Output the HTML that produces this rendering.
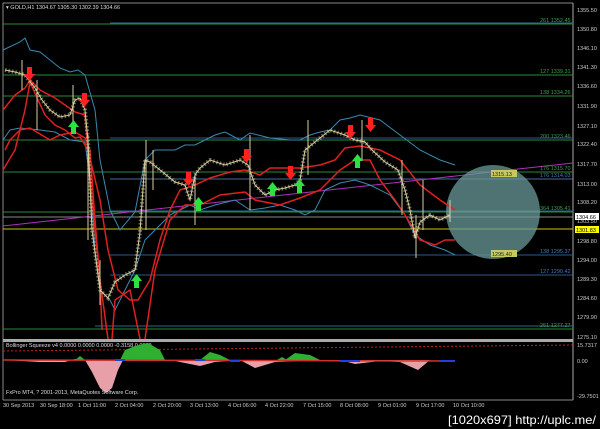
<!DOCTYPE html>
<html><head><style>
html,body{margin:0;padding:0;background:#000;width:600px;height:429px;overflow:hidden}
svg{display:block}
text{font-family:"Liberation Sans",sans-serif;font-size:6px}
.s{font-size:5.5px}
</style></head><body>
<svg width="600" height="429" viewBox="0 0 600 429">
<rect width="600" height="429" fill="#000"/>
<line x1="3" y1="3" x2="573" y2="3" stroke="#888" stroke-width="1"/>
<line x1="3" y1="3" x2="3" y2="400" stroke="#888" stroke-width="1"/>
<line x1="573" y1="3" x2="573" y2="400" stroke="#aaa" stroke-width="1"/>
<line x1="3" y1="400" x2="573" y2="400" stroke="#888"/>
<rect x="3" y="339" width="570" height="3" fill="#aaa"/>
<g stroke-width="1">
<line x1="3" y1="24" x2="573" y2="24" stroke="#2a8a3a"/>
<line x1="110" y1="23" x2="573" y2="23" stroke="#2a6a8a"/>
<line x1="3" y1="75" x2="573" y2="75" stroke="#2a8a3a"/>
<line x1="3" y1="96" x2="573" y2="96" stroke="#2a8a3a"/>
<line x1="110" y1="138" x2="573" y2="138" stroke="#2a5a8a"/>
<line x1="3" y1="140" x2="573" y2="140" stroke="#2a8a3a"/>
<line x1="3" y1="172" x2="573" y2="172" stroke="#2a8a3a"/>
<line x1="110" y1="179" x2="573" y2="179" stroke="#4a6a9a"/>
<line x1="3" y1="212" x2="573" y2="212" stroke="#2a8a3a"/>
<line x1="110" y1="211" x2="573" y2="211" stroke="#2a6a8a"/>
<line x1="3" y1="217" x2="573" y2="217" stroke="#888"/>
<line x1="3" y1="229" x2="573" y2="229" stroke="#c8c800"/>
<line x1="110" y1="255" x2="573" y2="255" stroke="#2a5a8a"/>
<line x1="110" y1="275" x2="573" y2="275" stroke="#2a5a8a"/>
<line x1="3" y1="329" x2="573" y2="329" stroke="#2a8a3a"/>
<line x1="95" y1="326" x2="573" y2="326" stroke="#2a6a8a"/>
<line x1="3" y1="226" x2="573" y2="163" stroke="#b030c0"/>
</g>
<circle cx="493" cy="212" r="47" fill="#6a9a9a" opacity="0.75"/>
<polyline fill="none" stroke="#3a8ab0" stroke-width="1" points="3,50 20,42 25,38 30,50 40,52 50,60 60,68 70,72 78,70 85,75 95,110 100,160 110,210 120,230 135,212 145,160 155,150 165,150 175,150 185,145 195,145 205,140 215,135 225,132 240,140 250,133 270,138 290,140 300,140 310,135 320,132 330,130 340,120 350,118 360,115 380,120 400,135 420,150 440,160 455,165"/>
<polyline fill="none" stroke="#3a8ab0" stroke-width="1" points="3,140 10,130 20,128 40,130 55,132 70,140 85,142 90,180 95,250 100,290 110,300 115,310 125,290 135,270 145,240 155,230 170,215 180,210 190,205 200,210 215,205 235,200 250,210 265,208 280,205 295,210 305,215 315,210 325,190 340,183 355,180 370,185 390,195 405,215 415,235 430,245 445,250 455,255"/>
<polyline fill="none" stroke="#e02020" stroke-width="1.5" points="3,110 15,95 25,88 30,80 40,90 55,98 65,105 75,112 85,115 92,200 100,280 108,339"/>
<polyline fill="none" stroke="#e02020" stroke-width="1.5" points="3,170 15,150 25,110 30,82 38,100 45,115 55,125 65,130 75,138 80,137 88,150 100,200 108,250 118,290 130,300 138,300 150,280 160,240 170,210 180,190 195,185 210,178 230,172 245,170 260,175 270,168 280,168 300,168 320,165 335,160 345,148 360,146 380,150 400,160 420,185 440,200 455,210"/>
<polyline fill="none" stroke="#e02020" stroke-width="1.5" points="5,150 10,140 20,130 30,128 50,140 60,135 75,132 85,138 90,150 95,220 100,280 102,330"/>
<polyline fill="none" stroke="#e02020" stroke-width="1.5" points="112,339 115,300 130,290 140,339"/>
<polyline fill="none" stroke="#e02020" stroke-width="1.5" points="145,339 155,270 170,220 185,205 200,205 220,195 245,192 255,200 280,205 300,198 320,190 340,170 355,160 370,160 380,180 395,200 405,215 420,240 435,245 445,240 455,240"/>
<polyline fill="none" stroke="#c8c090" stroke-width="4" stroke-dasharray="1.5,2" opacity="0.55" points="5,70 15,72 25,75 35,88 42,100 50,110 60,117 70,115 75,100 80,98 85,110 88,140 92,230 100,290 108,298 115,282 125,275 135,270 140,232 145,160 150,162 160,170 175,182 185,185 190,200 195,175 200,168 210,160 225,165 240,160 248,165 255,185 265,195 275,190 285,188 295,185 300,180 305,150 315,142 330,130 345,135 355,140 365,142 372,150 385,162 398,170 405,190 410,210 415,238 420,222 430,215 440,220 450,215"/>
<polyline fill="none" stroke="#d8d0a0" stroke-width="1" points="5,70 15,72 25,75 35,88 42,100 50,110 60,117 70,115 75,100 80,98 85,110 88,140 92,230 100,290 108,298 115,282 125,275 135,270 140,232 145,160 150,162 160,170 175,182 185,185 190,200 195,175 200,168 210,160 225,165 240,160 248,165 255,185 265,195 275,190 285,188 295,185 300,180 305,150 315,142 330,130 345,135 355,140 365,142 372,150 385,162 398,170 405,190 410,210 415,238 420,222 430,215 440,220 450,215"/>
<g stroke="#d8d0a0" stroke-width="1">
<line x1="22" y1="60" x2="22" y2="90"/><line x1="37" y1="80" x2="37" y2="130"/><line x1="73" y1="85" x2="73" y2="130"/><line x1="88" y1="135" x2="88" y2="240"/><line x1="100" y1="260" x2="100" y2="305"/><line x1="146" y1="140" x2="146" y2="230"/><line x1="153" y1="150" x2="153" y2="190"/><line x1="195" y1="175" x2="195" y2="225"/><line x1="250" y1="135" x2="250" y2="210"/><line x1="308" y1="120" x2="308" y2="175"/><line x1="362" y1="120" x2="362" y2="160"/><line x1="402" y1="160" x2="402" y2="215"/><line x1="416" y1="215" x2="416" y2="258"/><line x1="423" y1="180" x2="423" y2="230"/><line x1="450" y1="200" x2="450" y2="222"/>
</g>
<g fill="#ff2020">
<path d="M27,67h5v7h3l-5.5,7l-5.5,-7h3z"/><path d="M82,93h5v7h3l-5.5,7l-5.5,-7h3z"/>
<path d="M186,172h5v7h3l-5.5,7l-5.5,-7h3z"/><path d="M244,149h5v7h3l-5.5,7l-5.5,-7h3z"/>
<path d="M288,166h5v7h3l-5.5,7l-5.5,-7h3z"/><path d="M348,125h5v7h3l-5.5,7l-5.5,-7h3z"/>
<path d="M368,118h5v7h3l-5.5,7l-5.5,-7h3z"/>
</g>
<g fill="#30e040">
<path d="M71,134h5v-7h3l-5.5,-7l-5.5,7h3z"/><path d="M134,288h5v-7h3l-5.5,-7l-5.5,7h3z"/>
<path d="M196,211h5v-7h3l-5.5,-7l-5.5,7h3z"/><path d="M270,196h5v-7h3l-5.5,-7l-5.5,7h3z"/>
<path d="M297,193h5v-7h3l-5.5,-7l-5.5,7h3z"/><path d="M355,168h5v-7h3l-5.5,-7l-5.5,7h3z"/>
</g>
<g fill="#3aa04a">
<text class="s" x="540" y="22">261 1352.45</text><text class="s" x="540" y="73">127 1339.31</text><text class="s" x="540" y="94">138 1334.26</text>
<text class="s" x="540" y="138">200 1323.46</text><text class="s" x="540" y="170">176 1315.70</text><text class="s" x="540" y="210">364 1305.41</text>
<text class="s" x="540" y="327">261 1277.27</text>
</g>
<g fill="#4a7ab0"><text class="s" x="540" y="177">176 1314.03</text><text class="s" x="540" y="253">138 1295.37</text><text class="s" x="540" y="273">127 1290.42</text></g>
<rect x="491" y="170" width="26" height="7" fill="#c8c860"/><text class="s" x="492" y="176" fill="#223">1315.13</text>
<rect x="491" y="250" width="26" height="7" fill="#c8c860"/><text class="s" x="492" y="256" fill="#223">1295.40</text>
<g fill="#ccc">
<text class="s" x="577" y="12">1355.50</text><text class="s" x="577" y="31">1350.80</text><text class="s" x="577" y="50">1346.10</text><text class="s" x="577" y="69">1341.30</text>
<text class="s" x="577" y="88">1336.60</text><text class="s" x="577" y="108">1331.90</text><text class="s" x="577" y="128">1327.10</text><text class="s" x="577" y="146">1322.40</text>
<text class="s" x="577" y="166">1317.70</text><text class="s" x="577" y="186">1313.00</text><text class="s" x="577" y="204">1308.20</text><text class="s" x="577" y="223">1303.50</text>
<text class="s" x="577" y="243">1298.80</text><text class="s" x="577" y="262">1294.00</text><text class="s" x="577" y="281">1289.30</text><text class="s" x="577" y="300">1284.60</text>
<text class="s" x="577" y="319">1279.90</text><text class="s" x="577" y="339">1275.10</text><text class="s" x="577" y="347">15.7317</text><text class="s" x="577" y="363">0.00</text>
<text class="s" x="577" y="398">-29.7501</text>
</g>
<rect x="575" y="213" width="24" height="7" fill="#fff"/><text class="s" x="576" y="219" fill="#000">1304.66</text>
<rect x="575" y="226" width="24" height="7" fill="#ff0"/><text class="s" x="576" y="232" fill="#000">1301.83</text>
<text class="s" x="6" y="9" fill="#ddd">▾ GOLD,H1  1304.67 1305.30 1302.39 1304.66</text>
<line x1="3" y1="351" x2="573" y2="345" stroke="#c02020" stroke-dasharray="2,2"/>
<text class="s" x="6" y="347" fill="#ddd">Bollinger Squeeze v4 0.0000 0.0000 0.0000 -0.3158 0.0000</text>
<path d="M3,360 L40,362 L65,362 L75,359 L85,360 L92,372 L100,388 L106,393 L112,388 L118,370 L123,360 L150,360 L175,361 L200,366 L215,362 L240,360 L255,368 L275,362 L300,361 L340,360 L355,364 L380,361 L400,362 L418,370 L430,360 L440,360 L452,360Z" fill="#e8a0a8"/>
<path d="M120,360 L125,350 L135,346 L148,343 L160,350 L165,360Z M200,360 L210,352 L220,355 L230,360Z M285,360 L295,353 L310,355 L320,360Z M75,360 L80,356 L85,360Z M277,360 L282,357 L287,360Z" fill="#30b030"/>
<line x1="3" y1="360" x2="455" y2="361" stroke="#d03030" stroke-width="1.5"/>
<g stroke="#2040e0" stroke-width="2"><line x1="115" y1="360" x2="125" y2="360"/><line x1="195" y1="360" x2="205" y2="360"/><line x1="230" y1="361" x2="240" y2="361"/><line x1="340" y1="361" x2="360" y2="361"/><line x1="440" y1="361" x2="455" y2="361"/></g>
<text class="s" x="6" y="394" fill="#ddd">FxPro MT4, ? 2001-2013, MetaQuotes Software Corp.</text>
<g fill="#ccc">
<text class="s" x="3" y="407">30 Sep 2013</text><text class="s" x="40" y="407">30 Sep 18:00</text><text class="s" x="78" y="407">1 Oct 11:00</text>
<text class="s" x="115" y="407">2 Oct 04:00</text><text class="s" x="153" y="407">2 Oct 20:00</text><text class="s" x="190" y="407">3 Oct 13:00</text>
<text class="s" x="228" y="407">4 Oct 06:00</text><text class="s" x="265" y="407">4 Oct 22:00</text><text class="s" x="303" y="407">7 Oct 15:00</text>
<text class="s" x="340" y="407">8 Oct 08:00</text><text class="s" x="378" y="407">9 Oct 01:00</text><text class="s" x="416" y="407">9 Oct 17:00</text>
<text class="s" x="453" y="407">10 Oct 10:00</text>
</g>
<text x="448" y="424" fill="#fff" textLength="148" lengthAdjust="spacingAndGlyphs" style="font-size:12px;font-family:'Liberation Sans',sans-serif">[1020x697] http://uplc.me/</text>
</svg>
</body></html>
